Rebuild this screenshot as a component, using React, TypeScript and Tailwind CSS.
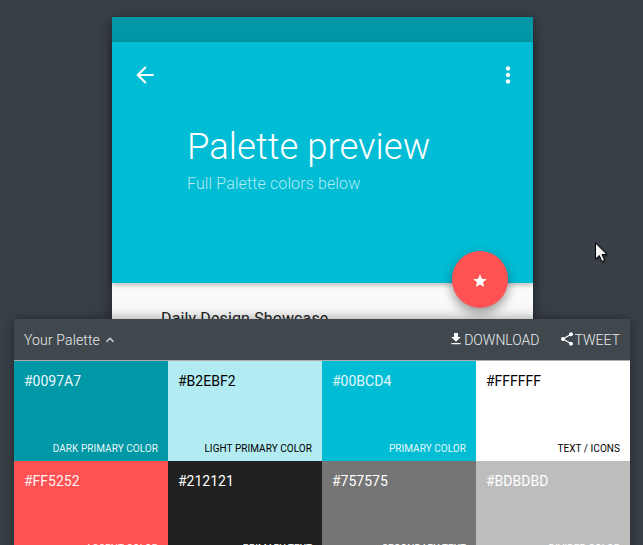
import React from "react";

type Swatch = { hex: string; label: string; className: string };

const swatches: Swatch[] = [
  { hex: "#0097A7", label: "DARK PRIMARY COLOR", className: "bg-[#0097a7] text-white/95" },
  { hex: "#B2EBF2", label: "LIGHT PRIMARY COLOR", className: "bg-[#b2ebf2] text-black" },
  { hex: "#00BCD4", label: "PRIMARY COLOR", className: "bg-[#00bcd4] text-white/90" },
  { hex: "#FFFFFF", label: "TEXT / ICONS", className: "bg-white text-black" },
  { hex: "#FF5252", label: "ACCENT COLOR", className: "bg-[#ff5252] text-white/95" },
  { hex: "#212121", label: "PRIMARY TEXT", className: "bg-[#212121] text-white" },
  { hex: "#757575", label: "SECONDARY TEXT", className: "bg-[#757575] text-white" },
  { hex: "#BDBDBD", label: "DIVIDER COLOR", className: "bg-[#bdbdbd] text-white" },
];

function Icon({ d, className }: { d: string; className: string }) {
  return (
    <svg viewBox="0 0 24 24" fill="currentColor" className={className}>
      <path d={d} />
    </svg>
  );
}

const BACK = "M20 11H7.83l5.59-5.59L12 4l-8 8 8 8 1.41-1.41L7.83 13H20v-2z";
const MORE =
  "M12 8c1.1 0 2-.9 2-2s-.9-2-2-2-2 .9-2 2 .9 2 2 2zm0 2c-1.1 0-2 .9-2 2s.9 2 2 2 2-.9 2-2-.9-2-2-2zm0 6c-1.1 0-2 .9-2 2s.9 2 2 2 2-.9 2-2-.9-2-2-2z";
const STAR = "M12 17.27L18.18 21l-1.64-7.03L22 9.24l-7.19-.61L12 2 9.19 8.63 2 9.24l5.46 4.73L5.82 21z";
const UP = "M12 8l-6 6 1.41 1.41L12 10.83l4.59 4.58L18 14z";
const DOWNLOAD = "M19 9h-4V3H9v6H5l7 7 7-7zM5 18v2h14v-2H5z";
const SHARE =
  "M18 16.08c-.76 0-1.44.3-1.96.77L8.91 12.7c.05-.23.09-.46.09-.7s-.04-.47-.09-.7l7.05-4.11c.54.5 1.25.81 2.04.81 1.66 0 3-1.34 3-3s-1.34-3-3-3-3 1.34-3 3c0 .24.04.47.09.7L8.04 9.81C7.5 9.31 6.79 9 6 9c-1.66 0-3 1.34-3 3s1.34 3 3 3c.79 0 1.5-.31 2.04-.81l7.12 4.16c-.05.21-.08.43-.08.65 0 1.61 1.31 2.92 2.92 2.92 1.61 0 2.92-1.31 2.92-2.92s-1.31-2.92-2.92-2.92z";

function Preview() {
  return (
    <section className="relative mt-[17px] ml-[112px] h-[302px] w-[421px] bg-[#fafafa] shadow-[0_3px_14px_rgba(0,0,0,0.5)]">
      <div className="h-[25px] bg-[#0097a7]" />
      <header className="relative h-[241px] bg-[#00bcd4] text-white shadow-[0_2px_5px_rgba(0,0,0,0.26)]">
        <div className="flex justify-between pt-5 pr-3 pl-5">
          <Icon d={BACK} className="size-[26px]" />
          <Icon d={MORE} className="size-[26px]" />
        </div>
        <h1 className="mt-[37px] ml-[75px] text-[36.5px] leading-[44px] font-light">Palette preview</h1>
        <p className="mt-[3px] ml-[75px] text-base leading-6 font-light tracking-[0.12px] text-[#b2ebf2]">
          Full Palette colors below
        </p>
        <button className="absolute top-[209px] left-[340px] flex h-[57px] w-14 items-center justify-center rounded-full bg-[#ff5252] pt-[3px] shadow-[0_5px_11px_rgba(0,0,0,0.4)]">
          <Icon d={STAR} className="size-4" />
        </button>
      </header>
      <p className="mt-[24px] ml-[49px] text-base leading-6 tracking-[0.13px] text-[#212121]">Daily Design Showcase</p>
    </section>
  );
}

function Palette() {
  return (
    <section className="relative z-10 mx-[14px] w-[616px] bg-[#40474d] shadow-[0_0_12px_rgba(0,0,0,0.4)]">
      <div className="flex h-[42px] items-center border-b border-[#b0adac] px-[10px] pt-px text-sm font-light text-white/90">
        <span className="tracking-[0.14px]">Your Palette</span>
        <Icon d={UP} className="ml-[2px] size-4 text-white/80" />
        <a className="ml-auto flex items-center">
          <Icon d={DOWNLOAD} className="mb-[3px] size-4 text-white" />
          DOWNLOAD
        </a>
        <a className="ml-[19px] flex items-center">
          <Icon d={SHARE} className="mb-[3px] size-4 text-white" />
          TWEET
        </a>
      </div>
      <div className="grid grid-cols-4">
        {swatches.map((s) => (
          <div key={s.hex} className={`flex h-[100px] flex-col justify-between p-[10px] ${s.className}`}>
            <span className="text-sm leading-5">{s.hex}</span>
            <span className="-mb-[5px] text-right text-[10px] leading-[14px] tracking-[0.05px]">{s.label}</span>
          </div>
        ))}
      </div>
    </section>
  );
}

export default function App() {
  return (
    <main className="relative flex h-[545px] w-[643px] flex-col overflow-hidden bg-[#394047] font-['Roboto',sans-serif]">
      <Preview />
      <Palette />
      <svg viewBox="0 0 16 24" className="absolute top-[240px] left-[593px] h-6 w-4 drop-shadow-[1px_1px_1px_rgba(0,0,0,0.5)]">
        <path
          d="M2.5 3v16l3.8-3.5 2.6 6 2.7-1.2-2.6-5.8h5z"
          fill="#f5f5f5"
          stroke="#000"
          strokeWidth="1"
        />
      </svg>
    </main>
  );
}
